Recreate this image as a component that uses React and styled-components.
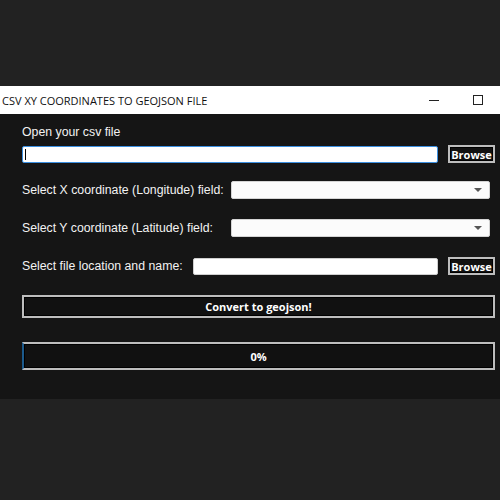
import React from 'react';
import styled, { createGlobalStyle } from 'styled-components';

const Global = createGlobalStyle`
	html, body {
		margin: 0;
		padding: 0;
		background: #222222;
	}
`;

const App = () => {
	return (
		<Page>
			<Global />
			<Window>
				<TitleBar>
					<Title>CSV XY COORDINATES TO GEOJSON FILE</Title>
					<Controls>
						<Minimize />
						<Maximize />
					</Controls>
				</TitleBar>
				<Body>
					<Label>Open your csv file</Label>
					<FileRow>
						<TextInput>
							<Caret />
						</TextInput>
						<Button>Browse</Button>
					</FileRow>
					<FieldRow $top={18}>
						<Label>Select X coordinate (Longitude) field:</Label>
						<Combo>
							<Arrow />
						</Combo>
					</FieldRow>
					<FieldRow $top={20}>
						<Label>Select Y coordinate (Latitude) field:</Label>
						<Combo>
							<Arrow />
						</Combo>
					</FieldRow>
					<FileRow $top={20}>
						<Label>Select file location and name:</Label>
						<SaveInput />
						<Button>Browse</Button>
					</FileRow>
					<WideButton>Convert to geojson!</WideButton>
					<Progress>
						<ProgressText>0%</ProgressText>
					</Progress>
				</Body>
			</Window>
		</Page>
	);
};

export default App;

const Page = styled.div`
	width: 500px;
	height: 500px;
	background: #222222;
	padding-top: 86px;
	box-sizing: border-box;
`;

const Window = styled.div`
	width: 500px;
	display: flex;
	flex-direction: column;
`;

const TitleBar = styled.div`
	height: 28px;
	background: #ffffff;
	display: flex;
	align-items: center;
	justify-content: space-between;
	padding-left: 2px;
	box-sizing: border-box;
`;

const Title = styled.span`
	font-family: 'Open Sans', sans-serif;
	font-size: 11px;
	color: #111111;
`;

const Controls = styled.div`
	display: flex;
	align-items: center;
	height: 100%;
`;

const Minimize = styled.div`
	width: 10px;
	height: 1px;
	background: #222;
	margin-right: 34px;
`;

const Maximize = styled.div`
	width: 8px;
	height: 8px;
	border: 1px solid #222;
	margin-right: 17px;
`;

const Body = styled.div`
	height: 285px;
	background: #151515;
	padding: 11px 5px 0 22px;
	box-sizing: border-box;
	display: flex;
	flex-direction: column;
`;

const Label = styled.div`
	font-family: 'Liberation Sans', Arial, sans-serif;
	font-size: 12.3px;
	line-height: 14px;
	color: #f2f2f2;
`;

const FileRow = styled.div`
	display: flex;
	align-items: center;
	margin-top: ${(p) => (p.$top ? p.$top : 6)}px;

	${Label} {
		width: 171px;
	}
`;

const FieldRow = styled.div`
	display: flex;
	align-items: center;
	margin-top: ${(p) => p.$top}px;

	${Label} {
		width: 209px;
	}
`;

const TextInput = styled.div`
	width: 416px;
	height: 17px;
	background: #ffffff;
	border: 1px solid #3b8fe0;
	border-radius: 2px;
	box-sizing: border-box;
	margin-right: 10px;
	display: flex;
	align-items: center;
	padding-left: 2px;
`;

const Caret = styled.div`
	width: 1px;
	height: 11px;
	background: #000;
`;

const SaveInput = styled.div`
	width: 245px;
	height: 17px;
	background: #ffffff;
	border: 1px solid #cfcfcf;
	border-radius: 2px;
	box-sizing: border-box;
	margin-right: 10px;
`;

const Button = styled.div`
	width: 47px;
	height: 18px;
	box-sizing: border-box;
	border: 2px solid #bdbdbd;
	outline: 1px solid #000;
	outline-offset: -3px;
	background: #111111;
	color: #ffffff;
	font-family: 'Open Sans', sans-serif;
	font-weight: 700;
	font-size: 11px;
	display: flex;
	align-items: center;
	justify-content: center;
`;

const Combo = styled.div`
	width: 259px;
	height: 18px;
	background: #fbfbfb;
	border: 1px solid #d4d4d4;
	border-radius: 2px;
	box-sizing: border-box;
	display: flex;
	align-items: center;
	justify-content: flex-end;
	padding-right: 7px;
`;

const Arrow = styled.div`
	width: 0;
	height: 0;
	border-left: 4px solid transparent;
	border-right: 4px solid transparent;
	border-top: 4px solid #555;
`;

const WideButton = styled.div`
	width: 473px;
	height: 23px;
	margin-top: 20px;
	box-sizing: border-box;
	border: 2px solid #bdbdbd;
	outline: 1px solid #000;
	outline-offset: -3px;
	background: #111111;
	color: #ffffff;
	font-family: 'Open Sans', sans-serif;
	font-weight: 700;
	font-size: 11px;
	display: flex;
	align-items: center;
	justify-content: center;
`;

const Progress = styled.div`
	width: 473px;
	height: 28px;
	margin-top: 24px;
	box-sizing: border-box;
	border: 2px solid #bdbdbd;
	border-left: 2px solid #1c5a8c;
	outline: 1px solid #000;
	outline-offset: -3px;
	background: #111111;
	display: flex;
	align-items: center;
	justify-content: center;
`;

const ProgressText = styled.span`
	color: #ffffff;
	font-family: 'Open Sans', sans-serif;
	font-weight: 700;
	font-size: 11px;
`;
